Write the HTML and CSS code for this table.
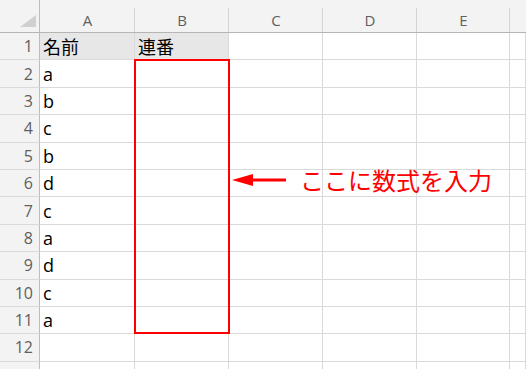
FILE: index.html
```html
<!DOCTYPE html>
<html lang="ja">
<head>
<meta charset="utf-8">
<link rel="stylesheet" href="styles.css">
</head>
<body>
<div class="sheet">
  <div class="grid">
    <div class="corner"><span class="tri"></span></div>
    <div class="ch">A</div><div class="ch">B</div><div class="ch">C</div><div class="ch">D</div><div class="ch">E</div><div class="ch last"></div>

    <div class="rh">1</div><div class="c hl">名前</div><div class="c hl">連番</div><div class="c"></div><div class="c"></div><div class="c"></div><div class="c"></div>
    <div class="rh">2</div><div class="c">a</div><div class="c"></div><div class="c"></div><div class="c"></div><div class="c"></div><div class="c"></div>
    <div class="rh">3</div><div class="c">b</div><div class="c"></div><div class="c"></div><div class="c"></div><div class="c"></div><div class="c"></div>
    <div class="rh">4</div><div class="c">c</div><div class="c"></div><div class="c"></div><div class="c"></div><div class="c"></div><div class="c"></div>
    <div class="rh">5</div><div class="c">b</div><div class="c"></div><div class="c"></div><div class="c"></div><div class="c"></div><div class="c"></div>
    <div class="rh">6</div><div class="c">d</div><div class="c"></div><div class="c"></div><div class="c"></div><div class="c"></div><div class="c"></div>
    <div class="rh">7</div><div class="c">c</div><div class="c"></div><div class="c"></div><div class="c"></div><div class="c"></div><div class="c"></div>
    <div class="rh">8</div><div class="c">a</div><div class="c"></div><div class="c"></div><div class="c"></div><div class="c"></div><div class="c"></div>
    <div class="rh">9</div><div class="c">d</div><div class="c"></div><div class="c"></div><div class="c"></div><div class="c"></div><div class="c"></div>
    <div class="rh">10</div><div class="c">c</div><div class="c"></div><div class="c"></div><div class="c"></div><div class="c"></div><div class="c"></div>
    <div class="rh">11</div><div class="c">a</div><div class="c"></div><div class="c"></div><div class="c"></div><div class="c"></div><div class="c"></div>
    <div class="rh">12</div><div class="c"></div><div class="c"></div><div class="c"></div><div class="c"></div><div class="c"></div><div class="c"></div>
    <div class="rh"></div><div class="c"></div><div class="c"></div><div class="c"></div><div class="c"></div><div class="c"></div><div class="c"></div>
  </div>
  <div class="redbox"></div>
  <div class="callout">
    <svg class="arrow" width="56" height="14" viewBox="0 0 56 14">
      <polygon points="0,7 21,1 21,13" fill="#ff0000"/>
      <rect x="18" y="5.5" width="36" height="3" fill="#ff0000"/>
    </svg>
    <span class="note">ここに数式を入力</span>
  </div>
</div>
</body>
</html>
```
FILE: styles.css
```css
html, body {
  margin: 0;
  padding: 0;
  background: #ffffff;
  overflow: hidden;
}
.sheet {
  position: relative;
  width: 526px;
  height: 369px;
  overflow: hidden;
}
.grid {
  display: grid;
  grid-template-columns: 40px 95px 94px 94px 94px 93px 16px;
  grid-template-rows: 33px repeat(12, 27.4px) 20px;
}
.corner, .ch {
  background: #f3f3f3;
  border-bottom: 1px solid #b5b5b5;
  box-sizing: border-box;
  position: relative;
}
.corner {
  border-right: 1px solid #bdbdbd;
}
.tri {
  position: absolute;
  right: 3px;
  bottom: 5px;
  width: 0;
  height: 0;
  border-left: 16px solid transparent;
  border-bottom: 12px solid #d0d0d0;
}
.ch {
  font-family: "Open Sans", "Liberation Sans", sans-serif;
  font-size: 15px;
  color: #5f5f5f;
  display: flex;
  align-items: center;
  justify-content: center;
  padding-top: 8px;
}
.ch::after {
  content: "";
  position: absolute;
  right: 0;
  top: 8px;
  bottom: 0;
  width: 1px;
  background: #d4d4d4;
}
.ch.last::after { display: none; }
.rh {
  background: #f3f3f3;
  border-right: 1px solid #bdbdbd;
  border-bottom: 1px solid #dadada;
  box-sizing: border-box;
  font-family: "Open Sans", "Liberation Sans", sans-serif;
  font-size: 16px;
  color: #5f5f5f;
  display: flex;
  align-items: center;
  justify-content: flex-end;
  padding-right: 6px;
}
.c {
  border-right: 1px solid #dadada;
  border-bottom: 1px solid #dadada;
  box-sizing: border-box;
  font-family: "Open Sans", "Noto Sans CJK JP", sans-serif;
  font-size: 18px;
  color: #000000;
  display: flex;
  align-items: center;
  padding-left: 3px;
  white-space: nowrap;
}
.c.hl {
  background: #e7e7e7;
  font-family: "Noto Sans CJK JP", sans-serif;
}
.redbox {
  position: absolute;
  left: 134px;
  top: 59px;
  width: 96px;
  height: 275px;
  border: 2px solid #ff0000;
  box-sizing: border-box;
}
.callout {
  position: absolute;
  left: 232px;
  top: 166px;
  display: flex;
  align-items: center;
  gap: 12px;
}
.arrow { display: block; }
.note {
  font-family: "Noto Sans CJK JP", sans-serif;
  font-size: 24px;
  color: #ff0000;
  line-height: 28px;
}
```
